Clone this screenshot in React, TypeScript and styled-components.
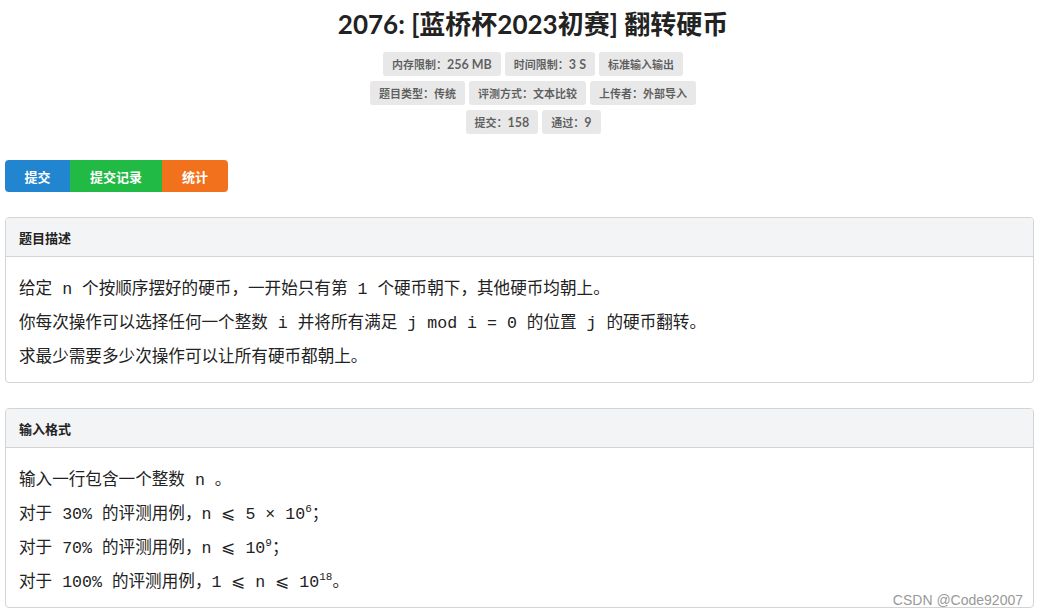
import React from 'react'
import styled, {createGlobalStyle} from 'styled-components'

const GlobalStyle = createGlobalStyle`
  html, body {
    margin: 0;
    padding: 0;
    background: #ffffff;
  }
  body {
    font-family: Lato, "Noto Sans CJK SC", sans-serif;
    color: rgba(0, 0, 0, .87);
  }
`;

const Page = styled.div`
  width: 1038px;
  height: 616px;
  overflow: hidden;
  position: relative;
  padding: 0 5px;
  box-sizing: border-box;
`;

const Header = styled.div`
  display: flex;
  flex-direction: column;
  align-items: center;
  padding-left: 28px;
`;

const Title = styled.h1`
  margin: 7px 0 11px;
  font-family: Lato, "Noto Sans CJK SC", sans-serif;
  font-size: 26px;
  font-weight: 700;
  line-height: 34px;
  color: #222;
`;

const LabelRow = styled.div`
  display: flex;
  gap: 4px;
  margin-bottom: 5px;
`;

const Label = styled.span`
  display: inline-flex;
  align-items: center;
  height: 24px;
  padding: 0 9px;
  background: #e8e8e8;
  border-radius: 3px;
  font-size: 11px;
  font-weight: 700;
  color: rgba(0, 0, 0, .6);
`;

const Num = styled.span`
  font-size: 12.5px;
`;

const ButtonGroup = styled.div`
  display: flex;
  width: fit-content;
  margin-top: 21px;
  border-radius: 4px;
  overflow: hidden;
`;

const Button = styled.button<{$bg: string; $w: number}>`
  width: ${p => p.$w}px;
  height: 32px;
  border: none;
  padding: 0;
  background: ${p => p.$bg};
  color: #fff;
  font-family: Lato, "Noto Sans CJK SC", sans-serif;
  font-size: 13px;
  font-weight: 700;
`;

const Card = styled.div`
  margin-top: 25px;
  width: 1029px;
  border: 1px solid #d4d4d5;
  border-radius: 4px;
  box-sizing: border-box;
  overflow: hidden;
`;

const CardHeader = styled.div`
  height: 38px;
  display: flex;
  align-items: center;
  padding-left: 13px;
  background: #f3f4f5;
  border-bottom: 1px solid #d4d4d5;
  font-size: 13px;
  font-weight: 700;
  color: #222;
`;

const CardBody = styled.div`
  padding: 16px 13px 7px;
  font-family: "Liberation Mono", "Noto Sans CJK SC", monospace;
  font-size: 16.6px;
  line-height: 34px;
  color: #222;
`;

const Line = styled.div`
  height: 34px;
  white-space: nowrap;
`;

const Sup = styled.sup`
  font-size: 11px;
  line-height: 0;
  vertical-align: 7px;
`;

const Watermark = styled.div`
  position: absolute;
  right: 15px;
  bottom: 8px;
  font-family: "Liberation Sans", Arial, sans-serif;
  font-size: 14px;
  color: #999;
`;

export default function App() {
  return (
    <>
      <GlobalStyle />
      <Page>
        <Header>
          <Title>2076: [蓝桥杯2023初赛] 翻转硬币</Title>
          <LabelRow>
            <Label>内存限制：<Num>256 MB</Num></Label>
            <Label>时间限制：<Num>3 S</Num></Label>
            <Label>标准输入输出</Label>
          </LabelRow>
          <LabelRow>
            <Label>题目类型：传统</Label>
            <Label>评测方式：文本比较</Label>
            <Label>上传者：外部导入</Label>
          </LabelRow>
          <LabelRow>
            <Label>提交：<Num>158</Num></Label>
            <Label>通过：<Num>9</Num></Label>
          </LabelRow>
        </Header>
        <ButtonGroup>
          <Button $bg="#2185d0" $w={65}>提交</Button>
          <Button $bg="#21ba45" $w={92}>提交记录</Button>
          <Button $bg="#f2711c" $w={66}>统计</Button>
        </ButtonGroup>
        <Card>
          <CardHeader>题目描述</CardHeader>
          <CardBody>
            <Line>给定 n 个按顺序摆好的硬币，一开始只有第 1 个硬币朝下，其他硬币均朝上。</Line>
            <Line>你每次操作可以选择任何一个整数 i 并将所有满足 j mod i = 0 的位置 j 的硬币翻转。</Line>
            <Line>求最少需要多少次操作可以让所有硬币都朝上。</Line>
          </CardBody>
        </Card>
        <Card>
          <CardHeader>输入格式</CardHeader>
          <CardBody>
            <Line>输入一行包含一个整数 n 。</Line>
            <Line>对于 30% 的评测用例，n ⩽ 5 × 10<Sup>6</Sup>；</Line>
            <Line>对于 70% 的评测用例，n ⩽ 10<Sup>9</Sup>；</Line>
            <Line>对于 100% 的评测用例，1 ⩽ n ⩽ 10<Sup>18</Sup>。</Line>
          </CardBody>
        </Card>
        <Watermark>CSDN @Code92007</Watermark>
      </Page>
    </>
  )
}
